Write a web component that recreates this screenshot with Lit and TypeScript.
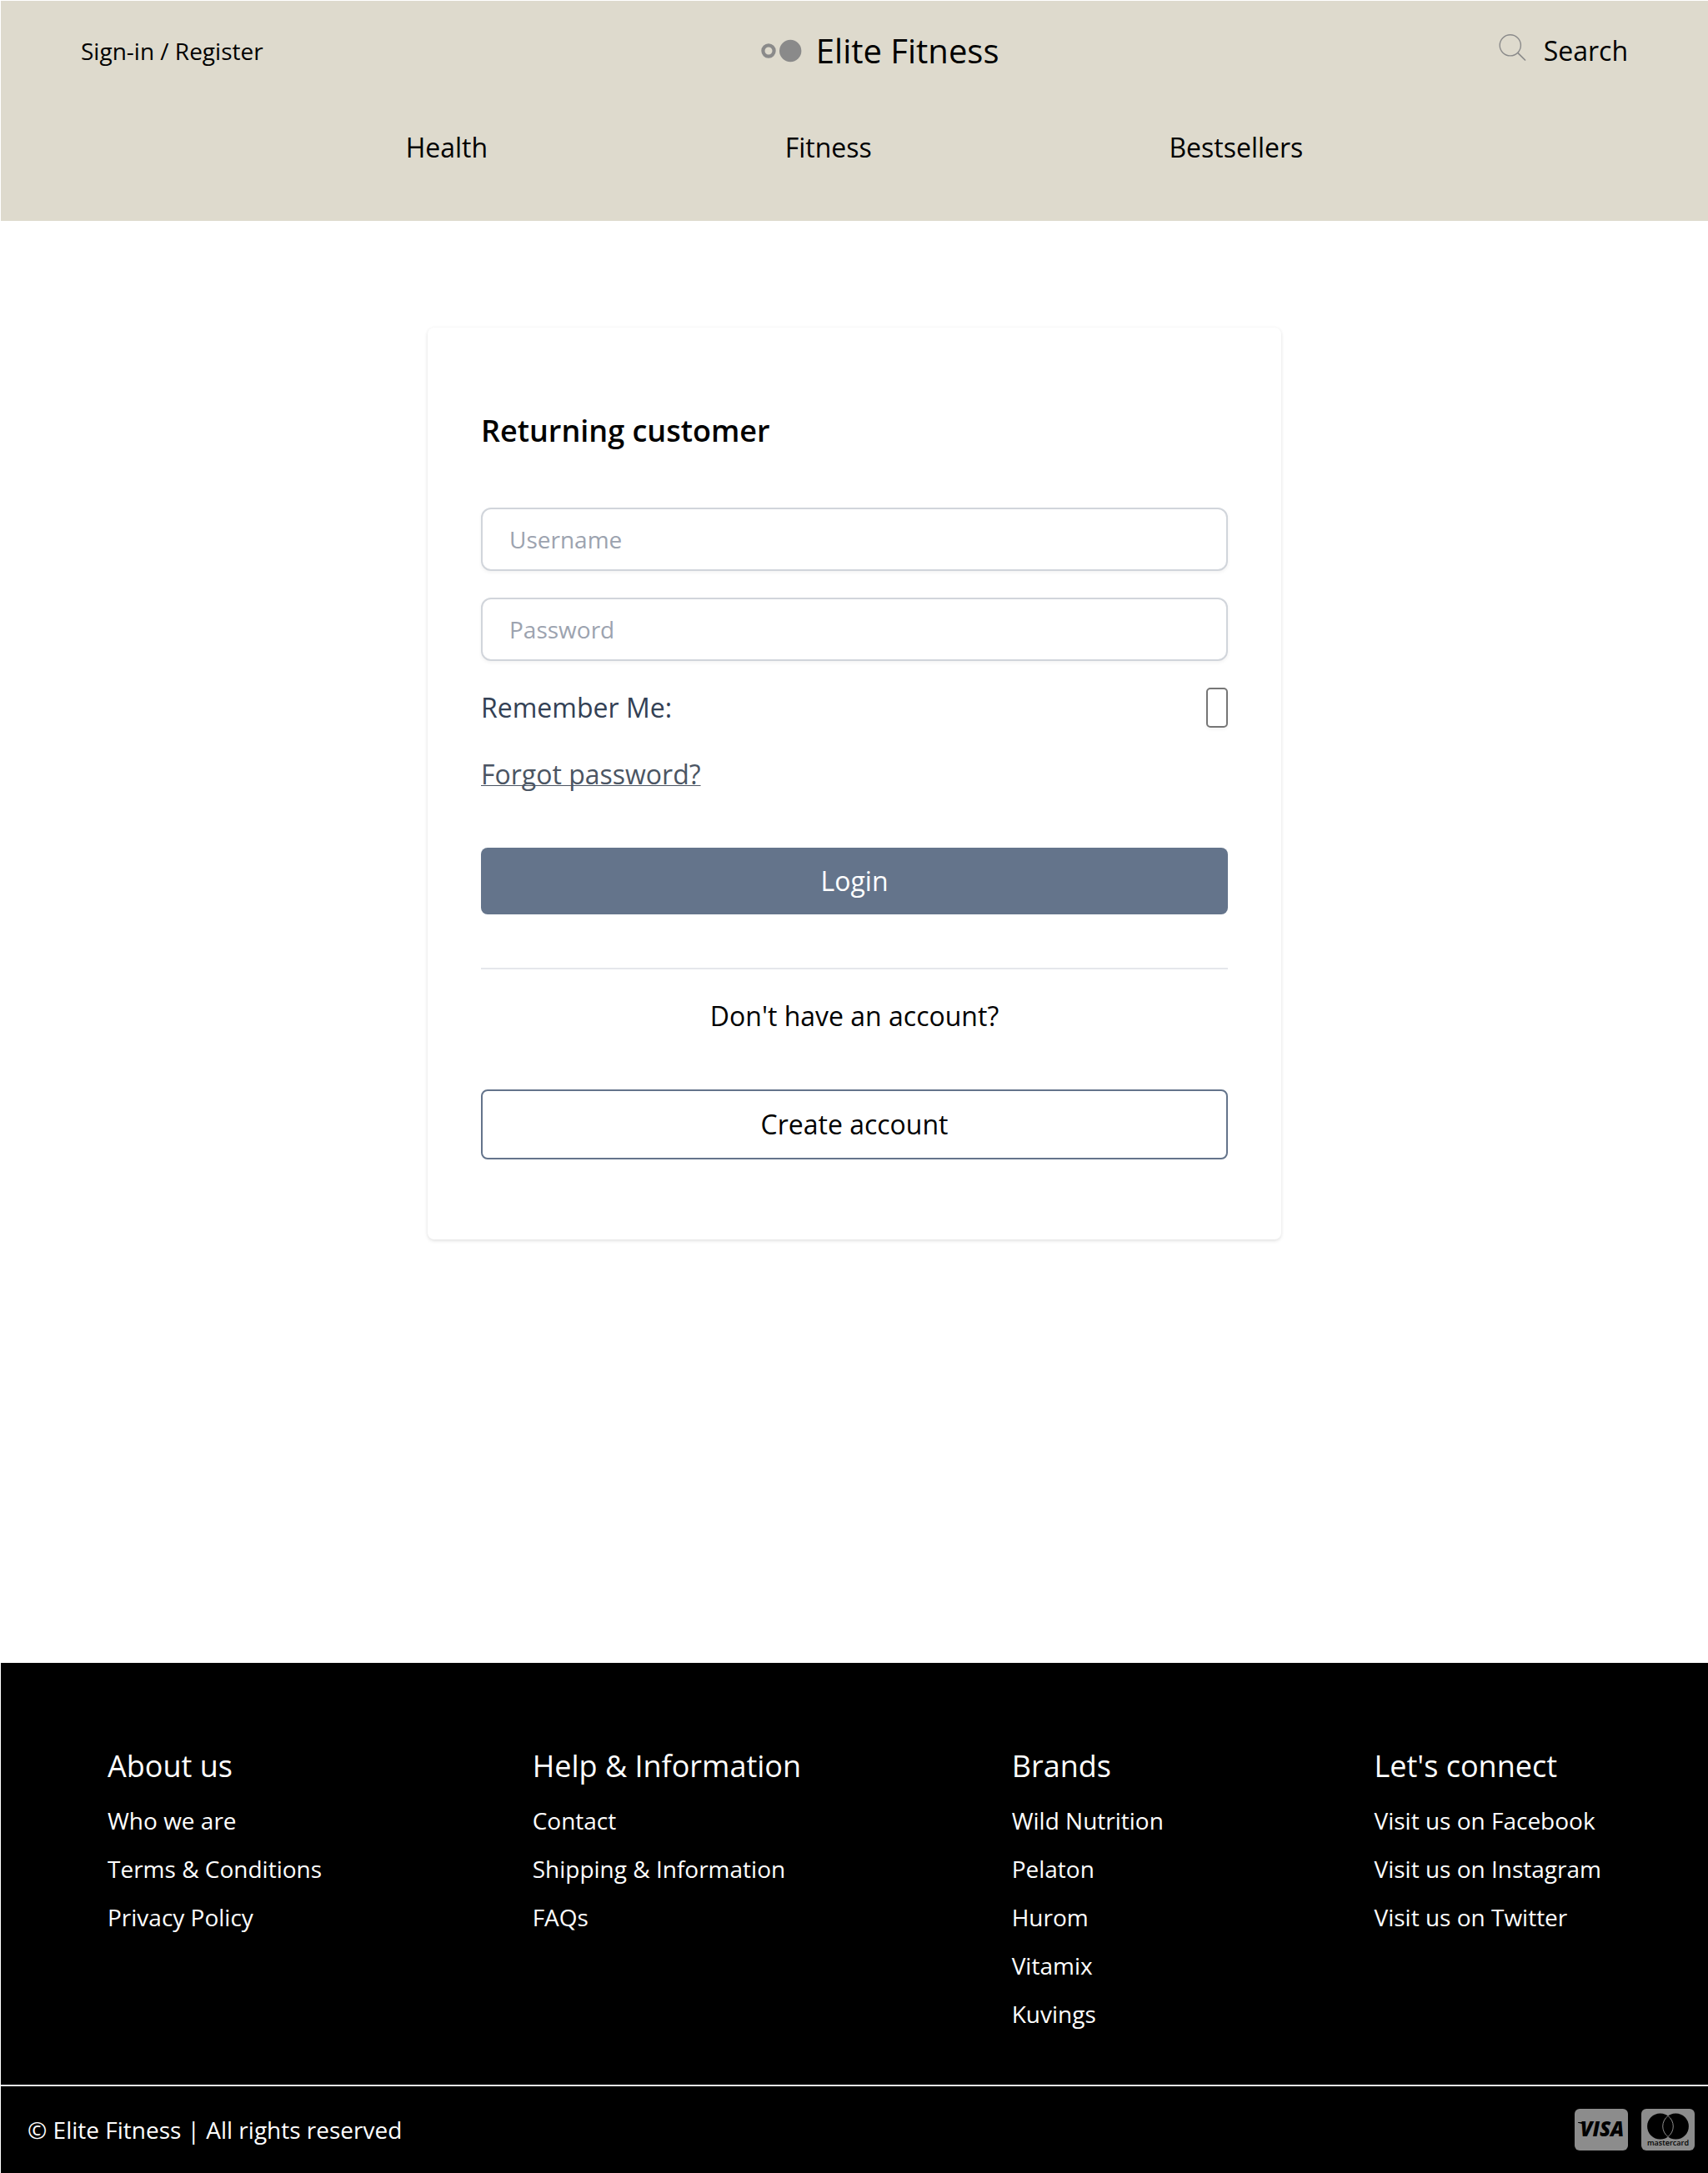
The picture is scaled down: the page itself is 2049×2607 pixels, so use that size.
import { LitElement, html, css, svg } from "lit";
import { customElement } from "lit/decorators.js";

interface FooterColumn {
  title: string;
  links: string[];
}

const NAV_LINKS = ["Health", "Fitness", "Bestsellers"];

const FOOTER_COLUMNS: FooterColumn[] = [
  { title: "About us", links: ["Who we are", "Terms & Conditions", "Privacy Policy"] },
  { title: "Help & Information", links: ["Contact", "Shipping & Information", "FAQs"] },
  { title: "Brands", links: ["Wild Nutrition", "Pelaton", "Hurom", "Vitamix", "Kuvings"] },
  {
    title: "Let's connect",
    links: ["Visit us on Facebook", "Visit us on Instagram", "Visit us on Twitter"],
  },
];

const base = css`
  *,
  *::before,
  *::after {
    box-sizing: border-box;
  }
  :host {
    box-sizing: border-box;
    display: block;
    font-family: "Open Sans", "Noto Sans", sans-serif;
    font-size: 32px;
    line-height: 48px;
  }
  a {
    color: inherit;
    text-decoration: none;
  }
`;

@customElement("site-header")
export class SiteHeader extends LitElement {
  static styles = [
    base,
    css`
      .header {
        background: #dedacd;
        color: #000;
        padding: 32px 96px 64px;
      }
      .top {
        display: flex;
        align-items: center;
        justify-content: space-between;
      }
      .account {
        font-size: 28px;
        line-height: 40px;
      }
      .brand {
        display: flex;
        align-items: center;
        gap: 16px;
        font-size: 40px;
        line-height: 56px;
      }
      .logo {
        display: block;
        width: 50px;
        height: 28px;
      }
      .search {
        display: flex;
        align-items: flex-start;
        gap: 16px;
      }
      .glass {
        display: block;
        width: 40px;
        height: 40px;
      }
      .nav {
        display: flex;
        justify-content: space-around;
        margin-top: 64px;
        padding: 0 calc(15vw - 96px);
      }
    `,
  ];

  render() {
    return html`
      <header class="header">
        <div class="top">
          <a class="account" href="#account">Sign-in / Register</a>
          <a class="brand" href="#home">
            <svg class="logo" viewBox="0 0 50 28" aria-hidden="true">
              <circle cx="9" cy="14" r="6.6" fill="none" stroke="#8a8a8a" stroke-width="4.2" />
              <circle cx="35.2" cy="14" r="13.2" fill="#8a8a8a" />
            </svg>
            <span>Elite Fitness</span>
          </a>
          <a class="search" href="#search">
            <svg class="glass" viewBox="0 0 40 40" fill="none" stroke="#8a8a8a" aria-hidden="true">
              <circle cx="15.8" cy="17.3" r="12.6" stroke-width="1.4" />
              <path d="M24.8 26.3 L34 35.5" stroke-width="1.7" />
            </svg>
            <span>Search</span>
          </a>
        </div>
        <nav class="nav">
          ${NAV_LINKS.map((label) => html`<a href="#${label.toLowerCase()}">${label}</a>`)}
        </nav>
      </header>
    `;
  }
}

@customElement("login-card")
export class LoginCard extends LitElement {
  static styles = [
    base,
    css`
      .card {
        display: flex;
        flex-direction: column;
        gap: 64px;
        padding: 96px 64px;
        border-radius: 8px;
        background: #fff;
        box-shadow: 0 2px 4px rgba(0, 0, 0, 0.1), 0 0 4px rgba(0, 0, 0, 0.04);
      }
      .title {
        margin: 0;
        font-size: 36px;
        line-height: 56px;
        font-weight: 600;
      }
      .form {
        display: flex;
        flex-direction: column;
        gap: 32px;
      }
      .field {
        width: 100%;
        padding: 16px 32px;
        border: 2px solid #d1d5db;
        border-radius: 12px;
        background: #fff;
        font: inherit;
        font-size: 28px;
        line-height: 40px;
        height: 76px;
        box-shadow: 0 2px 4px rgba(0, 0, 0, 0.05);
      }
      .field::placeholder {
        color: #9ca3af;
        opacity: 1;
      }
      .remember {
        display: flex;
        justify-content: space-between;
        color: #334155;
      }
      .check {
        appearance: none;
        width: 26px;
        margin: 0;
        border: 2px solid #767676;
        border-radius: 5px;
        background: #fff;
        box-shadow: 0 2px 4px rgba(0, 0, 0, 0.05);
      }
      .check:checked {
        background: #64748b;
      }
      .forgot {
        align-self: flex-start;
        color: #4b5563;
        text-decoration: underline;
        text-decoration-thickness: 1px;
        text-decoration-skip-ink: none;
      }
      .button {
        padding: 16px;
        border: 0;
        border-radius: 8px;
        font: inherit;
        cursor: pointer;
      }
      .primary {
        margin-top: 32px;
        background: #64748b;
        color: #fff;
      }
      .signup {
        display: flex;
        flex-direction: column;
        gap: 64px;
        border-top: 2px solid #e5e7eb;
        padding-top: 32px;
      }
      .question {
        margin: 0;
        text-align: center;
      }
      .outline {
        border: 2px solid #64748b;
        background: #fff;
        color: #000;
      }
    `,
  ];

  private submit(event: Event) {
    event.preventDefault();
  }

  render() {
    return html`
      <section class="card">
        <h1 class="title">Returning customer</h1>
        <form class="form" @submit=${this.submit}>
          <input class="field" type="text" placeholder="Username" aria-label="Username" />
          <input class="field" type="password" placeholder="Password" aria-label="Password" />
          <div class="remember">
            <label for="remember">Remember Me:</label>
            <input class="check" id="remember" type="checkbox" />
          </div>
          <a class="forgot" href="#forgot">Forgot password?</a>
          <button class="button primary" type="submit">Login</button>
        </form>
        <div class="signup">
          <p class="question">Don't have an account?</p>
          <button class="button outline" type="button">Create account</button>
        </div>
      </section>
    `;
  }
}

const visa = svg`
  <rect width="64" height="50" rx="6" fill="#8c8c8c" />
  <path d="M4 16 H11 L13 21 Q9 17.4 4 16.8 Z" fill="#000" />
  <text x="33" y="33" text-anchor="middle" font-family="Open Sans, sans-serif"
    font-size="24" font-weight="800" font-style="italic" fill="#000">VISA</text>
`;

const mastercard = svg`
  <rect width="64" height="50" rx="6" fill="#8c8c8c" />
  <circle cx="22.7" cy="21" r="15.6" fill="#000" />
  <circle cx="41.3" cy="21" r="15.6" fill="#000" />
  <path d="M32 8.5 A15.6 15.6 0 0 1 32 33.5 A15.6 15.6 0 0 1 32 8.5 Z"
    fill="#000" stroke="#8c8c8c" stroke-width="1" />
  <text x="32" y="44" text-anchor="middle" font-family="Open Sans, sans-serif"
    font-size="9" font-weight="600" fill="#000">mastercard</text>
`;

@customElement("site-footer")
export class SiteFooter extends LitElement {
  static styles = [
    base,
    css`
      .footer {
        background: #000;
        color: #fff;
        font-size: 28px;
        line-height: 42px;
      }
      .columns {
        display: flex;
        justify-content: space-between;
        padding: 96px 128px 64px;
      }
      .heading {
        margin: 0 0 16px;
        font-size: 36px;
        line-height: 56px;
        font-weight: 400;
      }
      .links {
        display: flex;
        flex-direction: column;
        gap: 16px;
        margin: 0;
        padding: 0;
        list-style: none;
      }
      .legal {
        display: flex;
        align-items: center;
        justify-content: space-between;
        padding: 27px 16px 27px 32px;
        border-top: 2px solid #e5e7eb;
      }
      .payments {
        display: flex;
        gap: 16px;
      }
      .payment {
        display: block;
        width: 64px;
        height: 50px;
      }
    `,
  ];

  render() {
    return html`
      <footer class="footer">
        <div class="columns">
          ${FOOTER_COLUMNS.map(
            (column) => html`
              <section>
                <h2 class="heading">${column.title}</h2>
                <ul class="links">
                  ${column.links.map((link) => html`<li><a href="#">${link}</a></li>`)}
                </ul>
              </section>
            `
          )}
        </div>
        <div class="legal">
          <span>© Elite Fitness | All rights reserved</span>
          <div class="payments">
            <svg class="payment" viewBox="0 0 64 50" role="img" aria-label="Visa">${visa}</svg>
            <svg class="payment" viewBox="0 0 64 50" role="img" aria-label="Mastercard">
              ${mastercard}
            </svg>
          </div>
        </div>
      </footer>
    `;
  }
}

@customElement("app-root")
export class AppRoot extends LitElement {
  static styles = [
    base,
    css`
      :host {
        display: flex;
        flex-direction: column;
        min-height: 100vh;
        padding: 1px 0 0 1px;
        background: #fff;
      }
      .main {
        flex: 1;
        padding: 128px 25%;
      }
    `,
  ];

  render() {
    return html`
      <site-header></site-header>
      <main class="main"><login-card></login-card></main>
      <site-footer></site-footer>
    `;
  }
}
